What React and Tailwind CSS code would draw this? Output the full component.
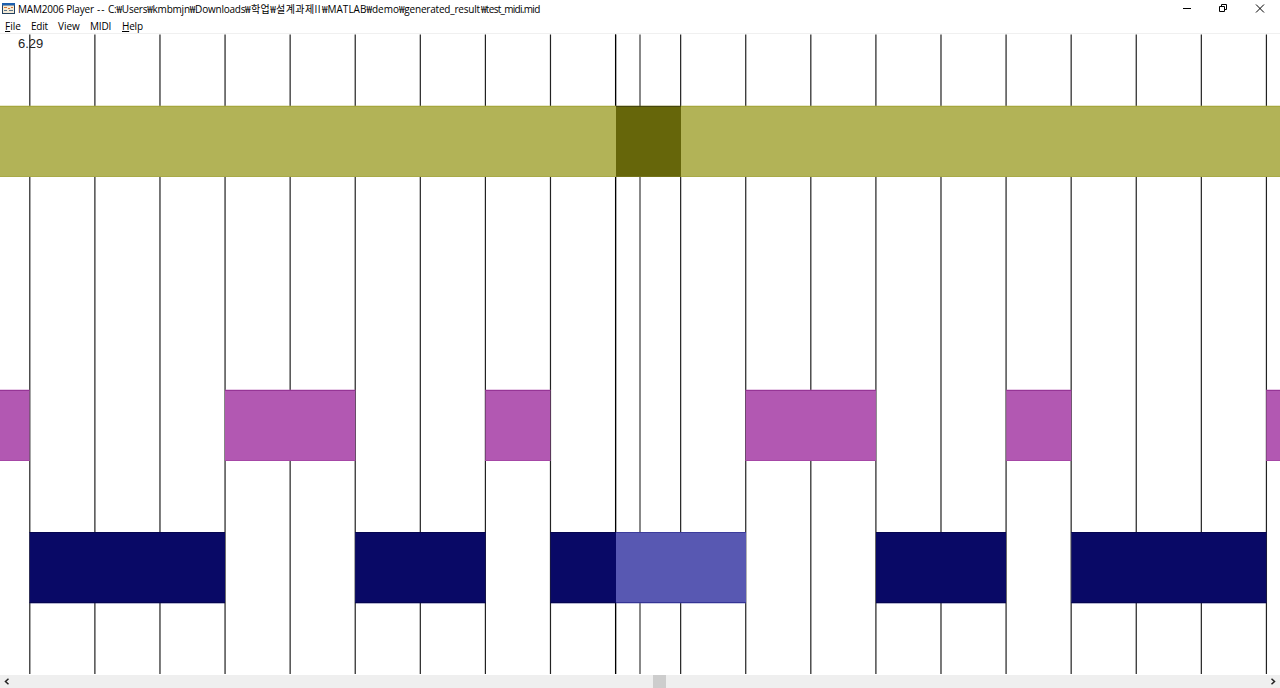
const beats = Array.from({ length: 20 }, (_, i) => 29.2 + i * 65.085);

const notes = [
  { x: 0, y: 71.7, w: 616, fill: "#b2b357", edge: "#a5a63c", base: "#a9aa48" },
  { x: 616, y: 71.7, w: 65, fill: "#66660a", edge: "#45450c", base: "#737318" },
  { x: 681, y: 71.7, w: 600, fill: "#b2b357", edge: "#a5a63c", base: "#a9aa48" },
  { x: -10, y: 355.7, w: 39.5, fill: "#b258b2", edge: "#963596", base: "#a648a6" },
  { x: 225, y: 355.7, w: 130.3, fill: "#b258b2", edge: "#963596", base: "#a648a6" },
  { x: 485.4, y: 355.7, w: 65, fill: "#b258b2", edge: "#963596", base: "#a648a6" },
  { x: 745.6, y: 355.7, w: 130.3, fill: "#b258b2", edge: "#963596", base: "#a648a6" },
  { x: 1006.3, y: 355.7, w: 65, fill: "#b258b2", edge: "#963596", base: "#a648a6" },
  { x: 1266.3, y: 355.7, w: 20, fill: "#b258b2", edge: "#963596", base: "#a648a6" },
  { x: 29.6, y: 498, w: 195.4, fill: "#090966", edge: "#050550", base: "#050550" },
  { x: 355.2, y: 498, w: 130.3, fill: "#090966", edge: "#050550", base: "#050550" },
  { x: 550.5, y: 498, w: 65.5, fill: "#090966", edge: "#050550", base: "#050550" },
  { x: 616, y: 498, w: 130, fill: "#5858b2", edge: "#3c3c9c", base: "#343494" },
  { x: 876, y: 498, w: 130, fill: "#090966", edge: "#050550", base: "#050550" },
  { x: 1071.4, y: 498, w: 195, fill: "#090966", edge: "#050550", base: "#050550" },
];

function AppIcon() {
  return (
    <svg width="13" height="12" viewBox="0 0 13 12" className="ml-[2px] shrink-0">
      <rect x="0" y="0" width="13" height="11" fill="#23405f" />
      <rect x="0" y="0" width="13" height="2.5" fill="#1d5fae" />
      <rect x="1" y="2.5" width="11" height="7.5" fill="#f3ead6" />
      <path d="M2 4.5h3M6 5.5h2M9 4.5h2" stroke="#d5783a" />
      <path d="M2 7.5h3M7 7.5h4" stroke="#5a7288" />
    </svg>
  );
}

function TitleBar() {
  return (
    <div className="flex h-[18px] items-center text-[10px] text-black">
      <AppIcon />
      <div className="ml-[3px] flex whitespace-pre leading-[18px]">
        <span className="w-[79px] tracking-[-0.2px]">MAM2006 Player</span>
        <span className="w-[11px] tracking-[1px]">--</span>
        <span className="w-[137px] tracking-[-0.22px]">C:₩Users₩kmbmjn₩Downloads</span>
        <span className="w-[77px] tracking-[0.4px]">₩학업₩설계과제II</span>
        <span className="w-[77px]">₩MATLAB₩demo</span>
        <span className="w-[82px] tracking-[-0.2px]">₩generated_result</span>
        <span className="tracking-[-0.7px]">₩test_midi.mid</span>
      </div>
      <div className="ml-auto flex">
        <svg width="97" height="18" viewBox="0 0 97 18" fill="none" stroke="#000">
          <path d="M0 8.5h8" />
          <path d="M36.5 6.5h5v5h-5zM38.5 6V4.5h5v5H42" />
          <path d="M73 4.5l8 8M81 4.5l-8 8" />
        </svg>
      </div>
    </div>
  );
}

function MenuBar() {
  return (
    <div className="flex h-4 border-b border-[#f0f0f0] pl-[5px] text-[10px] leading-4 text-black">
      <span className="w-[26px]"><u>F</u>ile</span>
      <span className="w-[27px] tracking-[-0.2px]">Edit</span>
      <span className="w-[32px]">View</span>
      <span className="w-[32px] tracking-[-0.2px]">MIDI</span>
      <span className="tracking-[-0.2px]"><u>H</u>elp</span>
    </div>
  );
}

function PianoRoll() {
  return (
    <svg width="1280" height="641" viewBox="0 0 1280 641" className="block">
      {beats.map((x, i) => (
        <rect key={i} x={x} y="0.5" width="1.2" height="639.5" fill="#222" />
      ))}
      {/* playhead and view centre */}
      <rect x="615" y="0.5" width="1.2" height="639.5" fill="#000" />
      <rect x="639" y="0.5" width="2" height="639.5" fill="#888" />
      {notes.map((n, i) => (
        <g key={i}>
          <rect x={n.x} y={n.y} width={n.w} height="71.3" fill={n.fill} />
          <rect x={n.x} y={Math.ceil(n.y)} width={n.w} height="1" fill={n.edge} />
          <rect x={n.x} y={Math.ceil(n.y) + 70} width={n.w} height="1" fill={n.base} />
        </g>
      ))}
      <text x="18" y="14" fontSize="13" fill="#222" fontFamily="Liberation Sans, sans-serif">6.29</text>
    </svg>
  );
}

function ScrollBar() {
  return (
    <div className="flex h-[13px] items-center justify-between bg-[#efefef] px-1">
      <svg width="6" height="7" viewBox="0 0 6 7" fill="none" stroke="#222" strokeWidth="1.5">
        <path d="M4.5 .8L1.5 3.5l3 2.7" />
      </svg>
      <div className="ml-[39px] h-[13px] w-[13px] bg-[#cdcdcd]"></div>
      <svg width="6" height="7" viewBox="0 0 6 7" fill="none" stroke="#222" strokeWidth="1.5">
        <path d="M1.5 .8l3 2.7-3 2.7" />
      </svg>
    </div>
  );
}

export default function App() {
  return (
    <div className="flex h-[688px] w-[1280px] flex-col overflow-hidden bg-white font-['Open_Sans','Noto_Sans_CJK_KR',sans-serif]">
      <TitleBar />
      <MenuBar />
      <PianoRoll />
      <ScrollBar />
    </div>
  );
}
